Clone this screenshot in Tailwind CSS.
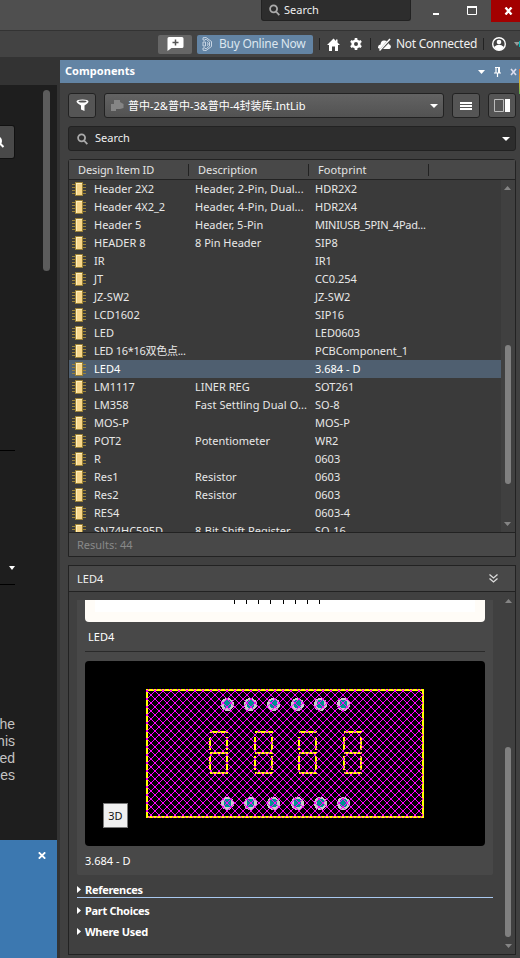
<!DOCTYPE html>
<html lang="en">
<head>
<meta charset="utf-8">
<title>Components</title>
<script src="https://cdn.jsdelivr.net/npm/@tailwindcss/browser@4"></script>
</head>
<body class="relative w-[520px] h-[958px] overflow-hidden bg-[#333] text-[#f0f0f0] text-[11px] leading-[18px] font-['Noto_Sans','Noto_Sans_CJK_SC',sans-serif] flex flex-col">
<header class="h-[31px] shrink-0 bg-[#4f4f4f] border-b border-[#333] flex justify-end items-start">
  <div class="w-[150px] h-[21px] bg-[#2d2d2d] border border-t-0 border-[#222] rounded-b-[3px] flex items-center pl-[7px] gap-[4px] mr-[20px]">
    <svg class="w-[11px] h-[12px]" viewBox="0 0 11 12" fill="none" stroke="#aaa" stroke-width="1.8"><circle cx="4.6" cy="4.8" r="3.5"/><path d="M7 7.5l3.3 3.6"/></svg>
    <span>Search</span>
  </div>
  <div class="flex h-[22px]">
    <svg class="w-[60px] h-[22px]" viewBox="0 0 60 22"><path d="M2 13h6v2H2z" fill="#fff"/><path d="M36.500 6.500h9v8h-9z" fill="none" stroke="#fff"/><path d="M36 6h10v2H36z" fill="#fff"/></svg>
    <div class="w-[29px] h-[22px] bg-[#a30000] flex items-center justify-center"><svg class="w-[9px] h-[8px] ml-[6px]" viewBox="0 0 9 8"><path d="M1.500 .5l6 7M7.500 .5l-6 7" stroke="#fff" stroke-width="2.300"/></svg></div>
  </div>
</header>
<div class="h-[26px] shrink-0 bg-[#434343] flex items-center">
  <div class="ml-[158px] w-[34px] h-[19px] rounded-[2px] bg-[#666] flex items-center justify-center"><svg class="w-[17px] h-[14px]" viewBox="0 0 17 14"><path d="M2 0h13q1.500 0 1.500 1.500v8q0 1.500-1.500 1.500H4.500L.5 14V1.500Q.5 0 2 0" fill="#fff"/><path d="M8.500 2.500v6M5.500 5.500h6" stroke="#555" stroke-width="1.500"/></svg></div>
  <div class="ml-[5px] w-[116px] h-[19px] rounded-[2px] bg-[#6384a4] flex items-center pl-[5px] text-[#dce6ef] text-[12px]"><svg class="w-[11px] h-[14px] mr-[6px] shrink-0" viewBox="0 0 11 14" fill="none" stroke="#d2deea" stroke-width=".9"><path d="M1 .8l3-.3 5.500 4v5l-5.500 4-3-.3V11l2-.2M1 .8V3l2 .2M1 5v4h2.500V5zM3 2.500h1.500l3 2.500v4l-3 2.500H3M5 5.500L6 6v2l-1 .5"/></svg><span class="whitespace-nowrap tracking-[-0.270px]">Buy Online Now</span></div>
  <div class="ml-[6px] w-px h-[12px] bg-[#222]"></div>
  <svg class="ml-[7px] w-[13px] h-[13px]" viewBox="0 0 13 13"><path d="M6.500.5L0 7h2v6h3V8.500h3V13h3V7h2L10.500 4.500V1.500H9V3z" fill="#fff"/></svg>
  <svg class="ml-[10px] w-[12px] h-[12px]" viewBox="0 0 12 12"><circle cx="6" cy="6" r="3.300" fill="none" stroke="#fff" stroke-width="2.600"/><path d="M6 0v2.500M6 9.500V12M.8 3l2.200 1.300M9 7.700L11.200 9M.8 9L3 7.700M9 4.300L11.200 3" stroke="#fff" stroke-width="2.600"/></svg>
  <div class="ml-[8px] w-px h-[12px] bg-[#222]"></div>
  <svg class="ml-[7px] w-[13px] h-[13px]" viewBox="0 0 13 13"><path d="M0 10Q-.3 7 2.500 6.500 3 2 6.500 2.500L9 3 2 11zM5 11h6.500q1.800-1 1.300-3-.5-1.500-2-1.800V5z" fill="#fff"/><path d="M1.500 12.500L12 1" stroke="#fff" stroke-width="1.500"/></svg>
  <span class="ml-[5px] text-[12px] whitespace-nowrap tracking-[-0.270px] w-[83px]">Not Connected</span>
  <div class="ml-[4px] w-px h-[12px] bg-[#222]"></div>
  <svg class="ml-[8px] w-[14px] h-[14px] shrink-0" viewBox="0 0 14 14"><circle cx="7" cy="7" r="6.300" fill="none" stroke="#fff" stroke-width="1.400"/><circle cx="7" cy="5" r="2.300" fill="#fff"/><path d="M2 10q5-4.500 10 0l-2 2.500q-3 1.500-6 0z" fill="#fff"/></svg>
  <svg class="ml-[8px] w-[6px] h-[4px] shrink-0" viewBox="0 0 6 4"><path d="M0 0h6L3 4z" fill="#999"/></svg>
</div>
<main class="flex-1 min-h-0 flex">
  <aside class="w-[57px] mt-[28px] mr-[3px] bg-[#1e1e1e] shrink-0 flex flex-col relative">
    <div class="absolute right-[7px] top-[5px] w-[7px] h-[181px] rounded-full bg-[#5c5c5c]"></div>
    <div class="mt-[40px] w-[15px] h-[34px] bg-[#494949] border border-l-0 border-[#111] rounded-r-[3px]"><svg class="w-[5px] h-[34px]" viewBox="0 0 5 34"><path d="M-3 11a4 4 0 1 1 0 8M-.5 17L3.500 21" fill="none" stroke="#fff" stroke-width="2"/></svg></div>
    <div class="mt-[291px] h-px w-[15px] bg-[#000]"></div>
    <svg class="mt-[115px] ml-[9px] w-[6px] h-[4px]" viewBox="0 0 6 4"><path d="M0 0h6L3 4z" fill="#fff"/></svg>
    <div class="mt-[14px] h-px w-[15px] bg-[#000]"></div>
    <div class="mt-[131px] w-[15px] h-[124px] flex flex-col items-end text-[14px] leading-[17px] text-[#c4c4c4] font-['Liberation_Sans',sans-serif]"><span>the</span><span>his</span><span>ed</span><span>es</span></div>
    <div class="flex-1 bg-[#3c78b0] flex justify-end"><svg class="mt-[12px] mr-[11px] w-[8px] h-[7px]" viewBox="0 0 8 7"><path d="M.8 .3l6.400 6.400M7.200 .3L.8 6.700" stroke="#fff" stroke-width="1.800"/></svg></div>
  </aside>
  <section class="flex-1 min-w-0 mt-[3px] bg-[#404040] flex flex-col">
    <div class="h-[23px] shrink-0 bg-[#6384a4] flex items-center pl-[5px]">
      <b class="flex-1 text-white tracking-[0.050px] mb-[2px]">Components</b>
      <svg class="w-[42px] h-[12px]" viewBox="0 0 42 12"><path d="M0 4h7L3.500 8z" fill="#fff"/><path d="M17 1.500h5M18 1v6M21 1v6M16 7h7M19.500 7v4" stroke="#fff" stroke-width="1.200"/><path d="M20 1h2v6h-2z" fill="#fff"/><path d="M33 3l5 6M38 3l-5 6" stroke="#dde" stroke-width="1.600"/></svg>
    </div>
    <div class="px-[8px] pr-[4px] pt-[10px] flex gap-[8px] shrink-0">
      <div class="w-[28px] h-[25px] rounded-[3px] border border-[#222] bg-[#555] flex items-center justify-center"><svg class="w-[13px] h-[13px]" viewBox="0 0 13 13"><path d="M.5 2.500Q.5.500 6.500.500t6 2q0 1.500-4 4V12L5 10.500v-4q-4.500-2.500-4.500-4" fill="#fff"/><ellipse cx="6.500" cy="2.500" rx="4" ry="1" fill="#555"/></svg></div>
      <div class="w-[340px] h-[25px] rounded-[3px] border border-[#222] bg-linear-to-b from-[#636363] to-[#525252] flex items-center pl-[6px] pr-[5px]">
        <svg class="w-[13px] h-[11px] mr-[4px]" viewBox="0 0 13 11"><path d="M3 0h6v2l3.500 2v4L9 9H5v2H0V4h3z" fill="#858585"/></svg>
        <span class="flex-1 whitespace-nowrap text-white">普中-2&amp;普中-3&amp;普中-4封装库.IntLib</span>
        <svg class="w-[8px] h-[4px]" viewBox="0 0 8 4"><path d="M0 0h8L4 4z" fill="#fff"/></svg>
      </div>
      <div class="w-[28px] h-[25px] rounded-[3px] border border-[#222] bg-[#555] flex items-center justify-center"><svg class="w-[12px] h-[8px]" viewBox="0 0 12 8"><path d="M0 0h12v2H0zM0 3h12v2H0zM0 6h12v2H0z" fill="#fff"/></svg></div>
      <div class="w-[28px] h-[25px] rounded-[3px] border border-[#222] bg-[#555] flex items-center justify-center"><svg class="w-[16px] h-[13px]" viewBox="0 0 16 13"><path d="M.5.500h9v12h-9z" fill="none" stroke="#bbb"/><path d="M11 0h5v13h-5z" fill="#fff"/></svg></div>
    </div>
    <div class="ml-[8px] mt-[8px] w-[448px] h-[25px] shrink-0 rounded-[3px] border border-[#222] bg-[#2d2d2d] flex items-center pl-[8px] pr-[5px]">
      <svg class="w-[11px] h-[12px] mr-[7px]" viewBox="0 0 11 12" fill="none" stroke="#aaa" stroke-width="1.800"><circle cx="4.600" cy="4.800" r="3.500"/><path d="M7 7.500l3.300 3.600"/></svg>
      <span class="flex-1 mb-[2px]">Search</span>
      <svg class="w-[8px] h-[4px]" viewBox="0 0 8 4"><path d="M0 0h8L4 4z" fill="#fff"/></svg>
    </div>
    <div class="ml-[8px] mt-[8px] w-[448px] h-[398px] shrink-0 border border-[#222] rounded-t-[3px] flex flex-col">
      <div class="h-[20px] shrink-0 bg-[#484848] border-b border-[#222] flex items-center text-[#e4e4e4]">
        <span class="w-[120px] h-[12px] border-r border-[#222] pl-[9px] leading-[12px] -tracking-[0.100px]">Design Item ID</span>
        <span class="w-[120px] h-[12px] border-r border-[#222] pl-[9px] leading-[12px]">Description</span>
        <span class="w-[120px] h-[12px] border-r border-[#222] pl-[9px] leading-[12px] tracking-[0.080px]">Footprint</span>
      </div>
      <div class="flex-1 min-h-0 flex bg-[#3a3a3a]">
        <div id="rows" class="w-[432px] h-[352px] overflow-hidden"></div>
        <div class="flex-1 bg-[#404040] relative">
          <svg class="absolute left-[3px] top-[6px] w-[7px] h-[4px]" viewBox="0 0 7 4"><path d="M0 4h7L3.500 0z" fill="#858585"/></svg>
          <div class="absolute left-[4px] top-[165px] w-[6px] h-[139px] rounded-full bg-[#808080]"></div>
          <svg class="absolute left-[3px] top-[342px] w-[7px] h-[4px]" viewBox="0 0 7 4"><path d="M0 0h7L3.500 4z" fill="#858585"/></svg>
        </div>
      </div>
      <div class="h-[24px] shrink-0 border-t border-[#222] bg-[#484848] pl-[8px] leading-[23px] text-[#888]">Results: 44</div>
    </div>
    <div class="ml-[8px] mt-[8px] w-[448px] h-[390px] shrink-0 border border-[#222] flex flex-col">
      <div class="h-[26px] shrink-0 bg-[#484848] border-b border-[#222] flex items-center justify-between pl-[8px] pr-[17px]"><span>LED4</span><svg class="w-[9px] h-[9px]" viewBox="0 0 9 9" fill="none" stroke="#ddd" stroke-width="1.300"><path d="M.5.500l4 3.500 4-3.500M.5 4.500l4 3.500 4-3.500"/></svg></div>
      <div class="flex-1 flex pt-[8px] pl-[8px] relative">
        <div class="w-[416px]">
          <div class="h-[275px] bg-[#484848] rounded-b-[2px] px-[8px] flex flex-col">
            <div class="h-[22px] bg-[#fffcf7] rounded-b-[4px] px-[10px] shrink-0"><svg class="w-[380px] h-[12px] bg-white" viewBox="0 0 380 12"><path d="M139.500 0v4M151.500 0v4M163.500 0v4M175.500 0v4M188.500 0v4M200.500 0v4M212.500 0v4M224.500 0v4" stroke="#000"/></svg></div>
            <div class="h-[30px] border-b border-[#2a2a2a] pl-[3px] leading-[30px] text-white shrink-0">LED4</div>
            <div class="mt-[9px] h-[185px] bg-black rounded-[4px] relative shrink-0">
              <svg id="pcb" class="w-[400px] h-[185px]" viewBox="85 661 400 185" shape-rendering="crispEdges"></svg>
              <div class="absolute left-[18px] top-[142px] w-[25px] h-[25px] border border-[#777] bg-[#f0f0f0] text-[#111] text-center leading-[24px]">3D</div>
            </div>
            <div class="leading-[29px] text-white">3.684 - D</div>
          </div>
          <div class="mt-[5px] text-white font-bold tracking-[-0.300px] flex flex-col gap-[3px]">
            <div class="h-[18px] border-b border-[#a9c8ef] flex items-center gap-[4px]"><svg class="w-[4px] h-[7px] mt-[1px]" viewBox="0 0 4 7"><path d="M0 0v7l4-3.500z" fill="#fff"/></svg><span class="mt-[2px]">References</span></div>
            <div class="h-[18px] flex items-center gap-[4px]"><svg class="w-[4px] h-[7px] mt-[1px]" viewBox="0 0 4 7"><path d="M0 0v7l4-3.500z" fill="#fff"/></svg><span class="mt-[2px]">Part Choices</span></div>
            <div class="h-[18px] flex items-center gap-[4px]"><svg class="w-[4px] h-[7px] mt-[1px]" viewBox="0 0 4 7"><path d="M0 0v7l4-3.500z" fill="#fff"/></svg><span class="mt-[2px]">Where Used</span></div>
          </div>
        </div>
        <svg class="absolute left-[436px] top-[7px] w-[7px] h-[4px]" viewBox="0 0 7 4"><path d="M0 4h7L3.500 0z" fill="#858585"/></svg>
        <div class="absolute left-[436px] top-[155px] w-[6px] h-[190px] rounded-full bg-[#808080]"></div>
        <svg class="absolute left-[436px] top-[352px] w-[7px] h-[4px]" viewBox="0 0 7 4"><path d="M0 0h7L3.500 4z" fill="#858585"/></svg>
      </div>
    </div>
  </section>
</main>
<div class="absolute right-0 top-[41px] w-px h-[6px] bg-[#00b4b4]"></div>
<div class="absolute right-0 top-[69px] w-px h-[25px] bg-linear-to-b from-[#f07030] via-[#d8b030] to-[#50b050]"></div>
<script>
const parts = [
["Header 2X2","Header, 2-Pin, Dual...","HDR2X2"],["Header 4X2_2","Header, 4-Pin, Dual...","HDR2X4"],["Header 5","Header, 5-Pin","MINIUSB_5PIN_4Pad..."],["HEADER 8","8 Pin Header","SIP8"],["IR","","IR1"],["JT","","CC0.254"],["JZ-SW2","","JZ-SW2"],["LCD1602","","SIP16"],["LED","","LED0603"],["LED 16*16双色点...","","PCBComponent_1"],["LED4","","3.684 - D"],["LM1117","LINER REG","SOT261"],["LM358","Fast Settling Dual O...","SO-8"],["MOS-P","","MOS-P"],["POT2","Potentiometer","WR2"],["R","","0603"],["Res1","Resistor","0603"],["Res2","Resistor","0603"],["RES4","","0603-4"],["SN74HC595D","8-Bit Shift Register","SO-16"]];
const chip = '<svg class="w-[14px] h-[14px] ml-[3px] mr-[8px] shrink-0" viewBox="0 0 14 14" shape-rendering="crispEdges"><path d="M0 2.500h14M0 5.500h14M0 8.500h14M0 11.500h14" stroke="#9b8238"/><path d="M3 0h8v14H3z" fill="#9b8238"/><path d="M4 1h6v12H4z" fill="#f8d78a"/><path d="M4 1h6v1H5v11H4z" fill="#fff0c0"/></svg>';
document.getElementById('rows').innerHTML = parts.map(p =>
 `<div class="h-[18px] flex items-center whitespace-nowrap ${p[0]==='LED4'?'bg-[#4f5f70] text-white':'text-[#e8e8e8]'}">${chip}<span class="w-[101px] ${p[0].length>12?'tracking-[-0.280px]':''}">${p[0]}</span><span class="w-[120px] ${p[1].length>20?'tracking-[0.090px]':''}">${p[1]}</span><span class="${p[2].length>15?'tracking-[-0.300px]':''}">${p[2]}</span></div>`).join('');
let s = '<defs><pattern id="hatch" width="8" height="8" patternUnits="userSpaceOnUse" x="147" y="691"><g fill="#f0f">';
for (let i=0;i<8;i++) s += `<rect x="${i}" y="${i}" width="1" height="1"/><rect x="${7-i}" y="${i}" width="1" height="1"/>`;
s += '</g></pattern></defs>';
for (const y of [704,803]) for (const x of [227,250,273,297,320,343]) s += `<circle cx="${x+.5}" cy="${y+.5}" r="6.500" fill="#c8c8c8"/><circle cx="${x+.5}" cy="${y}" r="4" fill="#009090"/>`;
s += '<path d="M146 690h278M423 690v128M146 817h278M147 690v128" stroke="#ff0" stroke-width="2" fill="none"/>';
for (const x of [209,254,298,343]) s += `<path d="M${x+1} 732h18M${x+1} 737v13M${x+18} 737v13M${x+1} 753h18M${x+1} 756v14M${x+18} 756v14M${x+1} 773h18" stroke="#ff0" stroke-width="2"/>`;
s += '<rect x="146" y="689" width="277" height="129" fill="url(#hatch)"/>';
document.getElementById('pcb').innerHTML = s;
</script>
</body>
</html>
